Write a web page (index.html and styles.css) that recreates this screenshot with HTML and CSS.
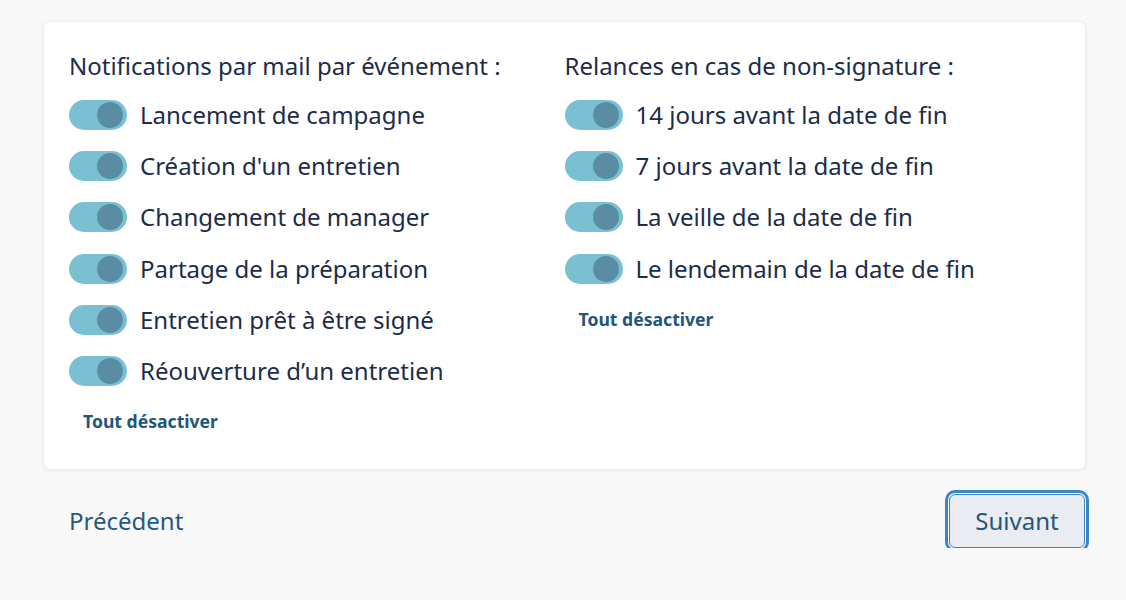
FILE: index.html
```html
<!DOCTYPE html>
<html lang="fr">
<head>
<meta charset="utf-8">
<link rel="stylesheet" href="styles.css">
</head>
<body>
<div class="page">
  <div class="card">
    <div class="col">
      <h2 class="title">Notifications par mail par événement :</h2>
      <ul class="list">
        <li class="row"><span class="toggle"><span class="knob"></span></span><span>Lancement de campagne</span></li>
        <li class="row"><span class="toggle"><span class="knob"></span></span><span>Création d'un entretien</span></li>
        <li class="row"><span class="toggle"><span class="knob"></span></span><span>Changement de manager</span></li>
        <li class="row"><span class="toggle"><span class="knob"></span></span><span>Partage de la préparation</span></li>
        <li class="row"><span class="toggle"><span class="knob"></span></span><span>Entretien prêt à être signé</span></li>
        <li class="row"><span class="toggle"><span class="knob"></span></span><span>Réouverture d’un entretien</span></li>
      </ul>
      <a class="off" href="#">Tout désactiver</a>
    </div>
    <div class="col">
      <h2 class="title">Relances en cas de non-signature :</h2>
      <ul class="list">
        <li class="row"><span class="toggle"><span class="knob"></span></span><span>14 jours avant la date de fin</span></li>
        <li class="row"><span class="toggle"><span class="knob"></span></span><span>7 jours avant la date de fin</span></li>
        <li class="row"><span class="toggle"><span class="knob"></span></span><span>La veille de la date de fin</span></li>
        <li class="row"><span class="toggle"><span class="knob"></span></span><span>Le lendemain de la date de fin</span></li>
      </ul>
      <a class="off" href="#">Tout désactiver</a>
    </div>
  </div>
  <div class="actions">
    <a class="prev" href="#">Précédent</a>
    <button class="next" type="button">Suivant</button>
  </div>
</div>
</body>
</html>
```

FILE: styles.css
```css
html, body {
  margin: 0;
  padding: 0;
  background: #f8f8f9;
  font-family: "Noto Sans", "Open Sans", sans-serif;
  color: #1c2c49;
}
.page {
  padding: 22px 41px 0 44px;
}
.card {
  background: #ffffff;
  border-radius: 6px;
  box-shadow: 0 0 0 1px #ebedf0, 0 1px 4px rgba(30, 40, 60, 0.10);
  padding: 29px 25px 36px 25px;
  display: grid;
  grid-template-columns: 1fr 1fr;
}
.title {
  margin: 0;
  font-size: 24px;
  font-weight: 400;
  line-height: 30px;
}
.list {
  list-style: none;
  margin: 19px 0 0 0;
  padding: 0;
  display: flex;
  flex-direction: column;
  gap: 21.2px;
}
.row {
  display: flex;
  align-items: center;
  gap: 13px;
  font-size: 24px;
  line-height: 30px;
}
.toggle {
  width: 58px;
  height: 30px;
  border-radius: 15px;
  background: #7bc0d2;
  display: flex;
  align-items: center;
  justify-content: flex-end;
  padding-right: 4px;
  box-sizing: border-box;
  flex: none;
}
.knob {
  width: 26px;
  height: 26px;
  border-radius: 50%;
  background: #5a8da4;
}
.off {
  display: inline-block;
  margin: 23px 0 0 14px;
  font-size: 17.6px;
  font-weight: 700;
  color: #215579;
  text-decoration: none;
  line-height: 24px;
}
.actions {
  display: flex;
  justify-content: space-between;
  align-items: center;
  padding: 25px 0 0 25px;
}
.prev {
  font-size: 24px;
  color: #26587f;
  text-decoration: none;
}
.next {
  font-family: "Noto Sans", "Open Sans", sans-serif;
  font-size: 24px;
  color: #25557a;
  background: #e9edf2;
  border: 1px solid #3d86c6;
  border-radius: 6px;
  width: 136px;
  height: 54px;
  outline: none;
  box-shadow: 0 0 0 1px #ffffff, 0 0 0 4px #3d86c6;
  margin: 0 0 0 0;
}
```
